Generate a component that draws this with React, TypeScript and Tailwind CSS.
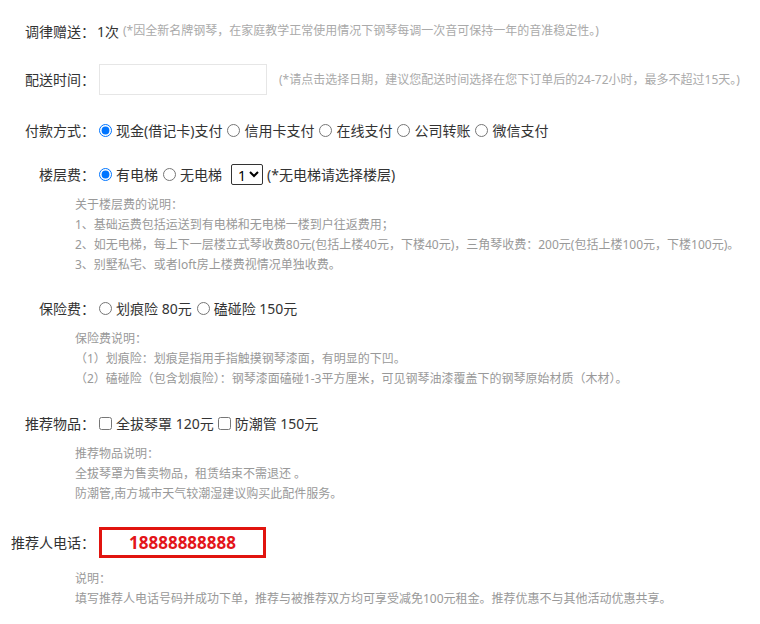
import React from "react";

const FONT = "font-['Noto_Sans','Noto_Sans_CJK_SC',sans-serif]";

function Label({ children }: { children: React.ReactNode }) {
  return <span className="w-[95px] shrink-0 text-right text-[14px] text-[#333]">{children}</span>;
}

function Radio({ checked, children, first }: { checked?: boolean; children: React.ReactNode; first?: boolean }) {
  return (
    <label className="flex items-center">
      <input
        type="radio"
        defaultChecked={checked}
        className={(first ? "ml-[4px]" : "ml-[5px]") + " mr-[4px] h-[13px] w-[13px]"}
      />
      <span>{children}</span>
    </label>
  );
}

function Check({ children, first }: { children: React.ReactNode; first?: boolean }) {
  return (
    <label className="flex items-center">
      <input type="checkbox" className={(first ? "ml-[4px]" : "ml-[4px]") + " mr-[4px] h-[13px] w-[13px]"} />
      <span>{children}</span>
    </label>
  );
}

function Note({ lines, className }: { lines: string[]; className: string }) {
  return (
    <div className={"pl-[75px] text-[12px] leading-[20px] text-[#999] " + className}>
      {lines.map((l) => (
        <div key={l} className="whitespace-pre">{l}</div>
      ))}
    </div>
  );
}

export default function App() {
  return (
    <div className={"h-[624px] w-[760px] bg-white pt-[19px] text-[#333] " + FONT}>
      <div className="flex h-[24px] items-center">
        <Label>调律赠送：</Label>
        <span className="ml-[2px] text-[14px]">1次</span>
        <span className="ml-[4px] text-[12px] text-[#aaa]">(*因全新名牌钢琴，在家庭教学正常使用情况下钢琴每调一次音可保持一年的音准稳定性。)</span>
      </div>

      <div className="mt-[21px] flex h-[31px] items-center">
        <Label>配送时间：</Label>
        <input className="ml-[4px] h-[31px] w-[168px] border border-[#e6e6e6] bg-white" />
        <span className="ml-[12px] text-[12px] text-[#aaa]">(*请点击选择日期，建议您配送时间选择在您下订单后的24-72小时，最多不超过15天。)</span>
      </div>

      <div className="mt-[23px] flex h-[24px] items-center text-[14px]">
        <Label>付款方式：</Label>
        <Radio checked first>现金(借记卡)支付</Radio>
        <Radio>信用卡支付</Radio>
        <Radio>在线支付</Radio>
        <Radio>公司转账</Radio>
        <Radio>微信支付</Radio>
      </div>

      <div className="mt-[20px] flex h-[24px] items-center text-[14px]">
        <Label>楼层费：</Label>
        <Radio checked first>有电梯</Radio>
        <Radio>无电梯</Radio>
        <select className="ml-[9px] mr-[4px] h-[21px] w-[32px] rounded-[2px] border border-[#333] bg-white pl-[2px] text-[14px] text-black">
          <option>1</option>
          <option>2</option>
          <option>3</option>
        </select>
        <span>(*无电梯请选择楼层)</span>
      </div>

      <Note
        className="mt-[9px]"
        lines={[
          "关于楼层费的说明：",
          "1、基础运费包括运送到有电梯和无电梯一楼到户往返费用；",
          "2、如无电梯，每上下一层楼立式琴收费80元(包括上楼40元，下楼40元)，三角琴收费：200元(包括上楼100元，下楼100元)。",
          "3、别墅私宅、或者loft房上楼费视情况单独收费。",
        ]}
      />

      <div className="mt-[21px] flex h-[24px] items-center text-[14px]">
        <Label>保险费：</Label>
        <Radio first>划痕险 80元</Radio>
        <Radio>磕碰险 150元</Radio>
      </div>

      <Note
        className="mt-[9px] leading-[19.5px]"
        lines={[
          "保险费说明：",
          "（1）划痕险：划痕是指用手指触摸钢琴漆面，有明显的下凹。",
          "（2）磕碰险（包含划痕险）：钢琴漆面磕碰1-3平方厘米，可见钢琴油漆覆盖下的钢琴原始材质（木材）。",
        ]}
      />

      <div className="mt-[22px] flex h-[24px] items-center text-[14px]">
        <Label>推荐物品：</Label>
        <Check first>全拔琴罩 120元</Check>
        <Check>防潮管 150元</Check>
      </div>

      <Note
        className="mt-[9px] leading-[19.5px]"
        lines={["推荐物品说明：", "全拔琴罩为售卖物品，租赁结束不需退还 。", "防潮管,南方城市天气较潮湿建议购买此配件服务。"]}
      />

      <div className="mt-[23px] flex h-[31px] items-center">
        <Label>推荐人电话：</Label>
        <div className="ml-[4px] flex h-[31px] w-[167px] items-center justify-center border-[3px] border-[#e1140f] text-[17px] font-bold text-[#e3151a]">
          18888888888
        </div>
      </div>

      <Note
        className="mt-[11px]"
        lines={["说明：", "填写推荐人电话号码并成功下单，推荐与被推荐双方均可享受减免100元租金。推荐优惠不与其他活动优惠共享。"]}
      />
    </div>
  );
}
